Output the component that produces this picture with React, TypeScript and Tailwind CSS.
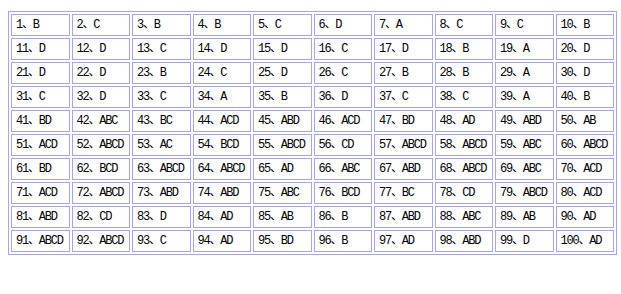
import React from 'react';

const answers: string[] = [
  'B', 'C', 'B', 'B', 'C', 'D', 'A', 'C', 'C', 'B',
  'D', 'D', 'C', 'D', 'D', 'C', 'D', 'B', 'A', 'D',
  'D', 'D', 'B', 'C', 'D', 'C', 'B', 'B', 'A', 'D',
  'C', 'D', 'C', 'A', 'B', 'D', 'C', 'C', 'A', 'B',
  'BD', 'ABC', 'BC', 'ACD', 'ABD', 'ACD', 'BD', 'AD', 'ABD', 'AB',
  'ACD', 'ABCD', 'AC', 'BCD', 'ABCD', 'CD', 'ABCD', 'ABCD', 'ABC', 'ABCD',
  'BD', 'BCD', 'ABCD', 'ABCD', 'AD', 'ABC', 'ABD', 'ABCD', 'ABC', 'ACD',
  'ACD', 'ABCD', 'ABD', 'ABD', 'ABC', 'BCD', 'BC', 'CD', 'ABCD', 'ACD',
  'ABD', 'CD', 'D', 'AD', 'AB', 'B', 'ABD', 'ABC', 'AB', 'AD',
  'ABCD', 'ABCD', 'C', 'AD', 'BD', 'B', 'AD', 'ABD', 'D', 'AD',
];

const App = () => {
  return (
    <div className="w-[621px] h-[294px] bg-white pl-[8px] pt-[11px]">
      <div className="w-[609px] border border-[#a3a3ff] p-[2px] grid grid-cols-10 gap-[2px]">
        {answers.map((ans: string, i: number) => (
          <div
            key={i}
            className="h-[22px] border border-[#a3a3ff] pl-[4px] flex items-center text-[12px] leading-none tracking-[-1.2px] text-black whitespace-nowrap overflow-hidden"
            style={{ fontFamily: '"Liberation Mono", "Noto Sans CJK SC", monospace' }}
          >
            {i + 1}、{ans}
          </div>
        ))}
      </div>
    </div>
  );
};

export default App;
